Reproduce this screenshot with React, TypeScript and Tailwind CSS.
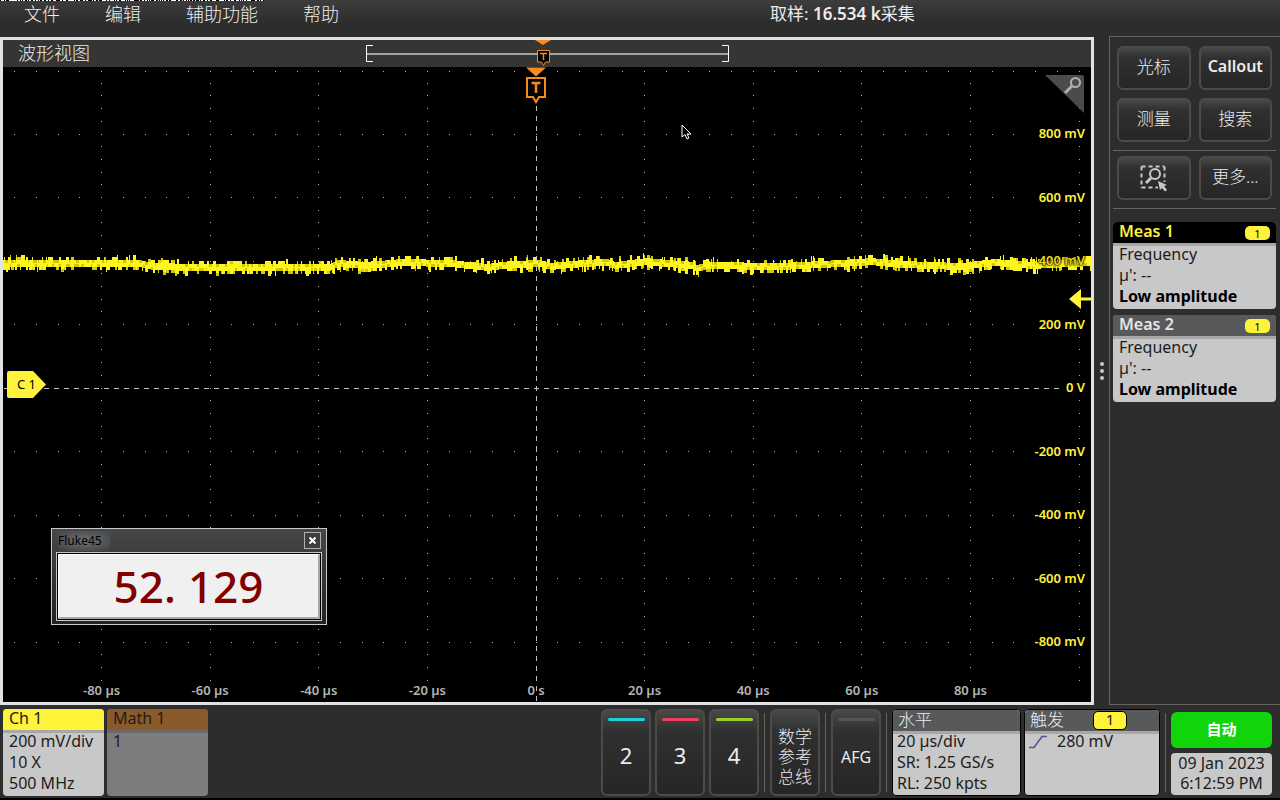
import type { ReactNode } from 'react';
import clsx from 'clsx';

const PLOT_WIDTH = 1088;
const PLOT_HEIGHT = 635;
const CENTER_X = 533;
const CENTER_Y = 321;
const DIV_X = 108.6;
const DIV_Y = 63.5;

const MENU_ITEMS = ['文件', '编辑', '辅助功能', '帮助'];

const VOLT_LABELS = [800, 600, 400, 200, 0, -200, -400, -600, -800];
const TIME_LABELS = [-80, -60, -40, -20, 0, 20, 40, 60, 80];

const CHANNELS = [
  { name: '2', bar: 'bg-[#1fd0d8]' },
  { name: '3', bar: 'bg-[#f0405e]' },
  { name: '4', bar: 'bg-[#98cf2c]' },
];

// [x, y] averages of the channel 1 trace
const TRACE: [number, number][] = [
  [0, 197], [77, 197], [136, 197], [147, 200], [197, 201], [327, 201], [333, 197], [362, 199],
  [397, 196], [447, 197], [484, 201], [507, 198], [537, 197], [547, 200], [577, 197], [602, 196],
  [612, 199], [642, 195], [687, 199], [694, 202], [702, 199], [777, 200], [837, 197], [867, 195],
  [897, 198], [957, 200], [992, 196], [1027, 199], [1088, 196],
];

function createRandom(seed: number) {
  let state = seed;
  return () => {
    state = (state * 1664525 + 1013904223) % 4294967296;
    return state / 4294967296;
  };
}

function traceLevel(x: number) {
  const index = Math.max(1, TRACE.findIndex(([px]) => px >= x));
  const [x0, y0] = TRACE[index - 1];
  const [x1, y1] = TRACE[index];
  return y0 + ((y1 - y0) * (x - x0)) / (x1 - x0);
}

function buildTrace() {
  const random = createRandom(45);
  let bright = '';
  let dim = '';
  let x = 0;
  while (x < PLOT_WIDTH) {
    const width = Math.min(1 + Math.floor(random() * 3), PLOT_WIDTH - x);
    const y = Math.round(traceLevel(x));
    const up = random();
    const down = random();
    const top = y - 4 - (up > 0.6 ? 3 : 0) - (up > 0.95 ? 2 : 0);
    const bottom = y + 3 + (down > 0.5 ? 3 : 0) + (down > 0.93 ? 2 : 0);
    bright += `M${x} ${top}h${width}V${bottom}h-${width}z`;
    if (random() > 0.6) dim += `M${x} ${top}h${width}v3h-${width}z`;
    if (random() > 0.6) dim += `M${x} ${bottom - 3}h${width}v3h-${width}z`;
    x += width;
  }
  return { bright, dim };
}

function buildDots() {
  let path = '';
  const dot = (x: number, y: number) => {
    path += `M${Math.floor(x)} ${Math.floor(y)}h1v1h-1z`;
  };
  for (let row = -4; row <= 4; row++) {
    if (row === 0) continue;
    for (let i = -24; i <= 25; i++) dot(CENTER_X + (i * DIV_X) / 5, CENTER_Y + row * DIV_Y);
  }
  for (let i = -24; i <= 25; i++) dot(CENTER_X + (i * DIV_X) / 5, 4);
  for (let column = -4; column <= 5; column++) {
    if (column === 0) continue;
    for (let i = -24; i <= 23; i++) dot(CENTER_X + column * DIV_X, CENTER_Y + (i * DIV_Y) / 5);
  }
  return path;
}

function buildEdgeNoise() {
  const random = createRandom(7);
  let path = '';
  for (let x = 0; x < 264; x++) {
    if (random() > 0.45) path += `M${x} 0h1v1h-1z`;
  }
  return path;
}

const trace = buildTrace();
const dots = buildDots();
const edgeNoise = buildEdgeNoise();

function PanelButton({ children, className, label }: { children: ReactNode; className?: string; label?: string }) {
  return (
    <button
      type="button"
      aria-label={label}
      className={clsx(
        'rounded-md border-2 border-[#4f4a47] bg-linear-to-b from-[#474949] via-[#303030] via-25% to-[#262626] text-[#ececec]',
        className,
      )}
    >
      {children}
    </button>
  );
}

function Divider() {
  return <div className="my-1 w-px shrink-0 bg-[#6b625c]" />;
}

function MenuBar() {
  return (
    <header className="relative flex h-9 shrink-0 items-start bg-linear-to-b from-[#3d3d3d] to-[#2d2d2d] to-60%">
      <svg className="absolute top-0 left-0 h-px w-[264px]" viewBox="0 0 264 1" shapeRendering="crispEdges">
        <path d="M0 0h264v1H0z" fill="#000" />
        <path d={edgeNoise} fill="#fff" />
      </svg>
      <nav className="flex flex-1 gap-[45px] pl-6">
        {MENU_ITEMS.map((item) => (
          <button key={item} type="button" className="text-[18px] leading-7 font-light">
            {item}
          </button>
        ))}
      </nav>
      <p className="w-[510px] text-[17px] leading-7">
        取样: <span className="font-semibold">16.534 k</span>采集
      </p>
    </header>
  );
}

function ZoomOverview() {
  return (
    <div className="relative flex h-[27px] shrink-0 items-center bg-[#353533]">
      <h1 className="w-[363px] pl-[15px] text-[18px] font-light">波形视图</h1>
      <svg className="h-[27px] w-[364px]" viewBox="0 0 364 27" fill="none">
        <path d="M1 14H363" stroke="#a5a5a5" strokeWidth="2" />
        <path d="M7 5.5H0.500V21.500H7M356 5.500H362.500V21.500H356" stroke="#fff" />
      </svg>
      <svg className="absolute top-0 left-[532px] h-[27px] w-4" viewBox="0 0 16 27" fill="none">
        <path d="M0 0H16L8 5z" fill="#f78b1f" />
        <path d="M2.500 10.500H14.500V22H10.500L8.500 25.500L6.500 22H2.500z" fill="#000" stroke="#f78b1f" />
        <path d="M5 13.500H12M8.500 13.500V20" stroke="#f78b1f" strokeWidth="1.500" />
      </svg>
    </div>
  );
}

function MeterWindow() {
  return (
    <section className="absolute bottom-[77px] left-12 w-[276px] border border-[#c8c8c8] bg-linear-to-b from-[#454749] to-[#202224] px-1 pb-[3px]">
      <div className="flex h-[23px] items-center justify-between pr-px pl-0.5">
        <h2 className="bg-radial from-[#6c6e70] to-transparent pr-2 text-[12px] leading-5 text-black">Fluke45</h2>
        <button
          type="button"
          aria-label="Close"
          className="flex h-[17px] w-[17px] items-center justify-center border border-[#b0b0b0] bg-[#3c3e40]"
        >
          <svg className="h-[7px] w-[7px]" viewBox="0 0 7 7" stroke="#fff" strokeWidth="2">
            <path d="M0.500 0.500L6.500 6.500M6.500 0.500L0.500 6.500" />
          </svg>
        </button>
      </div>
      <div className="border border-[#c8c8c8] bg-black p-px">
        <output className="flex h-[65px] items-center justify-center border-t border-r-2 border-b-2 border-l border-t-white border-r-[#a5a7a5] border-b-[#a5a7a5] border-l-white bg-[#f0f0f0] text-[44px] leading-none font-medium text-[#800000]">
          52.<span className="ml-3">129</span>
        </output>
      </div>
    </section>
  );
}

function Waveform() {
  return (
    <div className="relative min-h-0 flex-1 overflow-hidden bg-black">
      <svg
        className="absolute inset-0 h-full w-full"
        viewBox={`0 0 ${PLOT_WIDTH} ${PLOT_HEIGHT}`}
        preserveAspectRatio="none"
        shapeRendering="crispEdges"
      >
        <path d={dots} fill="#b4b4b4" />
        <path d="M1 321.500H1058" stroke="#c4c4c4" strokeDasharray="5 5" />
        <path d={trace.bright} fill="#fff51e" />
        <path d={trace.dim} fill="#d2c800" />
        <path d="M533.500 39V635" stroke="#c4c4c4" strokeDasharray="5 5" />
      </svg>

      {VOLT_LABELS.map((volts, i) => (
        <span
          key={volts}
          className={clsx(
            'absolute right-1.5 -translate-y-1/2 pl-1 text-[13px] leading-4 font-semibold',
            volts === 400 ? 'text-[#e6d820] text-shadow-[0_0_2px_#000,0_0_2px_#000,0_0_1px_#000]' : 'bg-black text-[#fff23a]',
          )}
          style={{ top: `${((CENTER_Y + (i - 4) * DIV_Y - 1) / PLOT_HEIGHT) * 100}%` }}
        >
          {volts === 0 ? '0 V' : `${volts} mV`}
        </span>
      ))}
      {TIME_LABELS.map((time, i) => (
        <span
          key={time}
          className="absolute bottom-1 -translate-x-1/2 text-[13px] leading-4 font-semibold text-[#b4b4b4]"
          style={{ left: `${((CENTER_X + (i - 4) * DIV_X) / PLOT_WIDTH) * 100}%` }}
        >
          {time === 0 ? '0 s' : `${time} µs`}
        </span>
      ))}

      <svg className="absolute top-0 left-[49%] h-[38px] w-5 -translate-x-1/2" viewBox="0 0 20 38" fill="none">
        <path d="M0 0.500H20L10 9.500z" fill="#f78b1f" />
        <path d="M1 11H19V30H13L10 35L7 30H1z" fill="#000" stroke="#f78b1f" strokeWidth="2" />
        <path d="M5.500 16H14.500M10 16V26" stroke="#f78b1f" strokeWidth="2.500" />
      </svg>

      <svg className="absolute top-2 right-[7px] h-[38px] w-[39px]" viewBox="0 0 39 38" fill="none">
        <path d="M0 0H37Q39 0 39 2V38z" fill="#4b4b4b" />
        <circle cx="30.500" cy="7.500" r="4.500" stroke="#b0b0b0" strokeWidth="2" />
        <path d="M27 11L20 18" stroke="#b0b0b0" strokeWidth="3" />
      </svg>

      <svg className="absolute top-[57px] left-[678px] h-4 w-3" viewBox="0 0 12 16">
        <path d="M1 1V13L4 10.500L6 15L8 14L6 10H10z" fill="#000" stroke="#fff" />
      </svg>

      <svg className="absolute top-[222px] right-0 h-5 w-[22px]" viewBox="0 0 22 20">
        <path d="M0 10L12 0V8.500H22V11.500H12V20z" fill="#fff23a" />
      </svg>

      <div className="absolute top-[304px] left-1 h-[27px] w-[39px]">
        <svg className="absolute inset-0 h-full w-full" viewBox="0 0 39 27">
          <path d="M2 0H26L39 13.500L26 27H2Q0 27 0 25V2Q0 0 2 0z" fill="#fff23a" />
        </svg>
        <span className="relative block pl-2.5 text-[13px] leading-[26px] text-black">C 1</span>
      </div>

      <MeterWindow />
    </div>
  );
}

function MeasurementCard({ title, active }: { title: string; active?: boolean }) {
  return (
    <section className="h-[87px] rounded bg-[#c8c8c8] text-[16px] leading-[21px] text-[#1c1c1c]">
      <div
        className={clsx(
          'flex h-[21px] items-start justify-between rounded-t px-1.5',
          active ? 'bg-black text-[#fff23a]' : 'bg-[#58595b] text-[#e6e6e6]',
        )}
      >
        <h2 className="leading-[19px] font-semibold">{title}</h2>
        <span className="mt-1 h-[14px] w-[25px] rounded-[5px] bg-[#fff23a] text-center text-[11px] leading-[15px] text-black">
          1
        </span>
      </div>
      <div className="px-1.5 pt-px shadow-[inset_0_3px_#a8a8a8]">
        <p>Frequency</p>
        <p>µ&#39;: --</p>
        <p className="font-bold text-black">Low amplitude</p>
      </div>
    </section>
  );
}

function SidePanel() {
  return (
    <aside className="flex w-[171px] shrink-0 flex-col border-y border-l border-[#6b625c] pt-[9px] pr-1 pl-[3px]">
      <div className="grid grid-cols-2 gap-x-2 gap-y-2 px-1 pb-2 text-[17px] font-light">
        <PanelButton className="h-11 pb-0.5">光标</PanelButton>
        <PanelButton className="h-11 pb-1 text-[16px] font-semibold">Callout</PanelButton>
        <PanelButton className="h-11 pb-0.5">测量</PanelButton>
        <PanelButton className="h-11 pb-0.5">搜索</PanelButton>
      </div>
      <div className="grid grid-cols-2 gap-x-2 border-y border-[#6b625c] px-1 pt-[5px] pb-2 text-[17px] font-light">
        <PanelButton className="flex h-11 items-center justify-center" label="Zoom area">
          <svg className="h-[27px] w-7" viewBox="0 0 28 27" fill="none">
            <path d="M1.500 1.500H24.500M1.500 22.500H18M1.500 1.500V23M24.500 1.500V17" stroke="#c8c8c8" strokeWidth="2" strokeDasharray="4 3" />
            <circle cx="15" cy="9" r="5" stroke="#c8c8c8" strokeWidth="2" />
            <path d="M11 13L6 18" stroke="#c8c8c8" strokeWidth="3" />
            <path d="M18 16L27 20L24 21L27 25L25 26.500L22 23L20 25z" fill="#c8c8c8" />
          </svg>
        </PanelButton>
        <PanelButton className="h-11 pb-0.5">更多...</PanelButton>
      </div>
      <div className="mt-[13px] flex flex-col gap-1.5">
        <MeasurementCard title="Meas 1" active />
        <MeasurementCard title="Meas 2" />
      </div>
    </aside>
  );
}

function ChannelButton({ name, bar }: { name: string; bar: string }) {
  return (
    <PanelButton className="flex w-[50px] flex-col items-center pt-[7px] text-[22px]">
      <span className={clsx('h-[3px] w-[37px] rounded-sm', bar)} />
      <span className="mt-6">{name}</span>
    </PanelButton>
  );
}

function BottomBar() {
  return (
    <footer className="flex h-[95px] shrink-0 border-b-2 border-black pt-1 pr-2 pl-[3px] text-[16px] leading-[21px] text-[#1c1c1c]">
      <div className="flex h-[87px] flex-1 gap-[3px]">
        <section className="w-[101px] rounded bg-[#c8c8c8]">
          <h2 className="h-[21px] rounded-t bg-[#fff23a] px-1.5 leading-[19px]">Ch 1</h2>
          <div className="px-1.5 pt-px shadow-[inset_0_3px_#a8a8a8]">
            <p>200 mV/div</p>
            <p>10 X</p>
            <p>500 MHz</p>
          </div>
        </section>
        <section className="w-[101px] rounded bg-[#7d7d7d]">
          <h2 className="h-[21px] rounded-t bg-[#8b5a2b] px-1.5 leading-[19px]">Math 1</h2>
          <div className="px-1.5 pt-px shadow-[inset_0_3px_#6a6a6a]">
            <p>1</p>
          </div>
        </section>
      </div>

      <div className="flex h-[87px] gap-[5px]">
        <div className="flex gap-1">
          {CHANNELS.map((channel) => (
            <ChannelButton key={channel.name} {...channel} />
          ))}
        </div>
        <Divider />
        <PanelButton className="w-[50px] pt-2 text-[17px] leading-5 font-light">数学参考总线</PanelButton>
        <Divider />
        <PanelButton className="flex w-[50px] flex-col items-center pt-[7px]">
          <span className="h-[3px] w-[37px] rounded-sm bg-[#545658]" />
          <span className="mt-[26px]">AFG</span>
        </PanelButton>
        <Divider />
        <section className="w-[129px] rounded border border-black bg-[#c8c8c8]">
          <h2 className="h-[21px] rounded-t bg-[#58595b] px-[5px] text-[17px] leading-[19px] font-light text-[#ececec]">水平</h2>
          <div className="px-1 shadow-[inset_0_3px_#a8a8a8]">
            <p>20 µs/div</p>
            <p>SR: 1.25 GS/s</p>
            <p>RL: 250 kpts</p>
          </div>
        </section>
        <section className="-ml-0.5 w-[136px] rounded border border-black bg-[#c8c8c8]">
          <div className="flex h-[21px] gap-[29px] rounded-t bg-[#58595b] px-[5px]">
            <h2 className="text-[17px] leading-[19px] font-light text-[#ececec]">触发</h2>
            <span className="mt-px h-[19px] w-[34px] rounded-[5px] border border-black bg-[#fff23a] text-center text-[15px] leading-[15px]">
              1
            </span>
          </div>
          <div className="flex items-center gap-2.5 px-1 shadow-[inset_0_3px_#a8a8a8]">
            <svg className="h-[14px] w-[18px]" viewBox="0 0 18 14" fill="none">
              <path d="M0 12.500H5L13 1.500H18" stroke="#54508c" strokeWidth="1.500" />
            </svg>
            <p>280 mV</p>
          </div>
        </section>
        <Divider />
        <div className="flex w-[101px] flex-col gap-[5px] pt-[3px]">
          <button
            type="button"
            className="h-9 shrink-0 rounded-md bg-[#11d40b] pb-0.5 text-[15px] font-semibold text-white"
          >
            自动
          </button>
          <p className="h-[42px] rounded bg-[#c8c8c8] text-center leading-5">
            09 Jan 2023
            <br />
            6:12:59 PM
          </p>
        </div>
      </div>
    </footer>
  );
}

export default function App() {
  return (
    <div className="flex h-screen flex-col bg-[#2d2d2d] font-['Noto_Sans','Noto_Sans_CJK_SC',sans-serif] text-[#ececec]">
      <MenuBar />
      <div className="flex min-h-0 flex-1">
        <main className="mt-px flex min-w-0 flex-1 flex-col border-3 border-[#e2e2e4]">
          <ZoomOverview />
          <Waveform />
        </main>
        <div className="flex w-[15px] shrink-0 flex-col items-center justify-center gap-[3px]">
          <span className="h-1 w-1 rounded-full bg-[#c8c8c8]" />
          <span className="h-1 w-1 rounded-full bg-[#c8c8c8]" />
          <span className="h-1 w-1 rounded-full bg-[#c8c8c8]" />
        </div>
        <SidePanel />
      </div>
      <BottomBar />
    </div>
  );
}
